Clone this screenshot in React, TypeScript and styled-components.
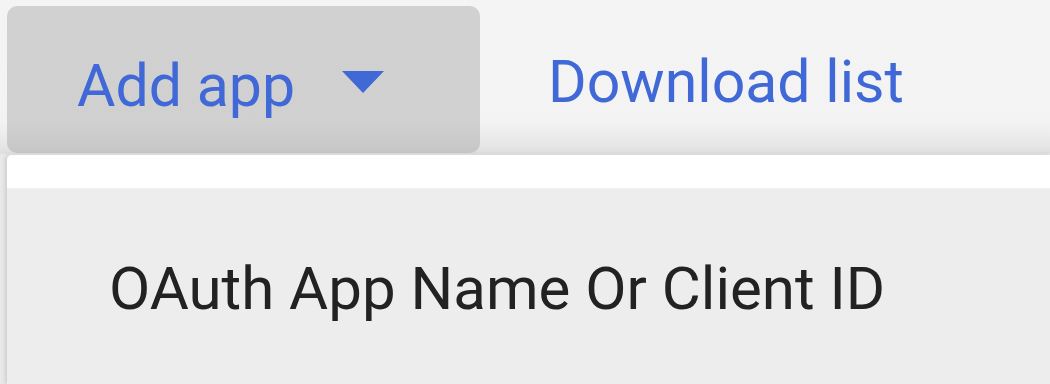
import React from "react";
import styled, { createGlobalStyle } from "styled-components";

const Global = createGlobalStyle`
  html, body { margin: 0; padding: 0; }
  body {
    background: #e9e9e9;
    font-family: Roboto, "Liberation Sans", Arial, sans-serif;
    width: 1050px;
    height: 384px;
    overflow: hidden;
  }
`;

const Page = styled.div`
  display: flex;
  flex-direction: column;
  width: 1050px;
  height: 384px;
  overflow: hidden;
`;

const Toolbar = styled.div`
  display: flex;
  align-items: flex-start;
  height: 155px;
  flex-shrink: 0;
  background: linear-gradient(
    to bottom,
    #f4f4f4 0px,
    #f3f3f3 122px,
    #e6e6e6 146px,
    #dedede 153px,
    #e9e9e9 155px
  );
`;

const AddButton = styled.button`
  display: flex;
  align-items: flex-start;
  box-sizing: border-box;
  margin: 6px 0 0 7px;
  width: 473px;
  height: 147px;
  padding: 45px 0 0 70px;
  border: none;
  border-radius: 10px;
  background: linear-gradient(to bottom, #d1d1d1 0px, #d0d0d0 118px, #c6c6c6 147px);
  cursor: pointer;
`;

const Label = styled.span<{ $color?: string; $size?: number }>`
  font-family: Roboto, "Liberation Sans", Arial, sans-serif;
  font-size: ${(p) => p.$size || 59}px;
  line-height: 70px;
  color: ${(p) => p.$color || "#4068d6"};
  white-space: nowrap;
`;

const Caret = styled.svg`
  display: block;
  margin: 20px 0 0 47px;
  flex-shrink: 0;
`;

const DownloadLink = styled.a`
  display: block;
  margin: 47px 0 0 68px;
  text-decoration: none;
  cursor: pointer;
`;

const Menu = styled.div`
  display: flex;
  flex-direction: column;
  margin-left: 7px;
  flex: 1;
  border-top-left-radius: 5px;
  overflow: hidden;
  box-shadow: -2px 0 4px rgba(0, 0, 0, 0.12);
`;

const MenuHeader = styled.div`
  height: 33px;
  background: #ffffff;
  border-bottom: 1px solid #f0f0f0;
`;

const MenuItem = styled.div`
  flex: 1;
  background: #ededed;
  padding: 65px 0 0 102px;
`;

export default function App() {
  return (
    <>
      <Global />
      <Page>
        <Toolbar>
          <AddButton>
            <Label>Add app</Label>
            <Caret width="42" height="22" viewBox="0 0 42 22">
              <path d="M0 0 L42 0 L21 22 Z" fill="#4068d6" />
            </Caret>
          </AddButton>
          <DownloadLink>
            <Label>Download list</Label>
          </DownloadLink>
        </Toolbar>
        <Menu>
          <MenuHeader />
          <MenuItem>
            <Label $color="#222222" $size={60}>
              OAuth App Name Or Client ID
            </Label>
          </MenuItem>
        </Menu>
      </Page>
    </>
  );
}
